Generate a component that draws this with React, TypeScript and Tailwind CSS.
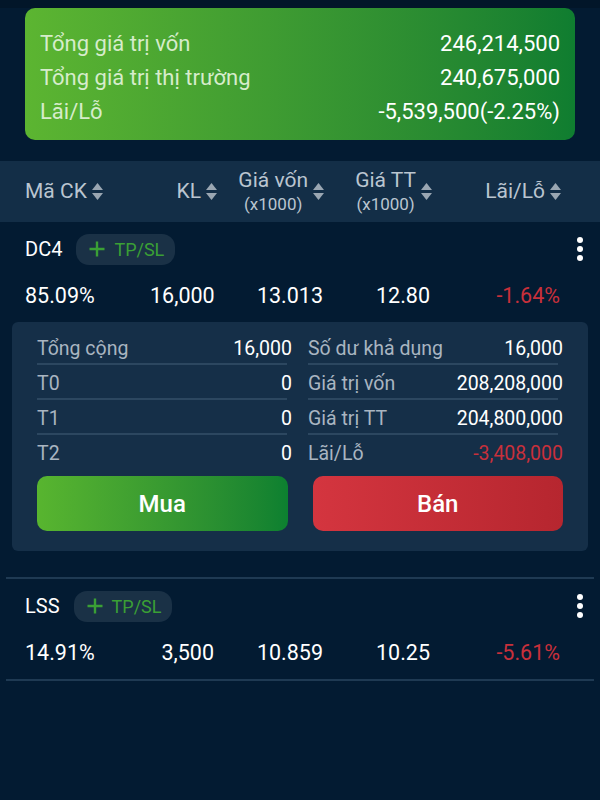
import React from "react";

const SortIcon = () => (
  <svg width="13" height="19" viewBox="0 0 13 19" className="shrink-0">
    <path d="M6.5 1 L12 8 L1 8 Z" fill="#9aa6b2" />
    <path d="M1 11 L12 11 L6.5 18 Z" fill="#9aa6b2" />
  </svg>
);

const Kebab = () => (
  <div className="flex flex-col items-center gap-[3px] w-[8px]">
    <span className="w-[6px] h-[6px] rounded-full bg-white" />
    <span className="w-[6px] h-[6px] rounded-full bg-white" />
    <span className="w-[6px] h-[6px] rounded-full bg-white" />
  </div>
);

const Pill = () => (
  <div className="h-[31px] pl-[13px] pr-[11px] rounded-[13px] bg-[#1a3146] flex items-center gap-[9px] text-[#3a9f35] text-[18px]">
    <svg width="16" height="16" viewBox="0 0 16 16">
      <path d="M8 0.5 V15.5 M0.5 8 H15.5" stroke="#3a9f35" strokeWidth="2.4" />
    </svg>
    <span>TP/SL</span>
  </div>
);

type Item = {
  code: string;
  pct: string;
  kl: string;
  von: string;
  tt: string;
  lai: string;
};

const StockItem = ({ item }: { item: Item }) => (
  <div className="pt-[12px] pb-[12px]">
    <div className="h-[30px] flex items-center pl-[25px] pr-[16px]">
      <span className="text-white text-[20px] mr-[14px]">{item.code}</span>
      <Pill />
      <div className="flex-1" />
      <Kebab />
    </div>
    <div className="mt-[16px] h-[30px] grid grid-cols-[125px_68px_107px_108px_129px] pl-[25px] items-center text-[21.5px] text-white">
      <div>{item.pct}</div>
      <div className="text-right pr-[4px]">{item.kl}</div>
      <div className="text-right pr-[2px]">{item.von}</div>
      <div className="text-right pr-[3px]">{item.tt}</div>
      <div className="text-right pr-[2px] text-[#c8303b]">{item.lai}</div>
    </div>
  </div>
);

const DetailRow = ({
  label,
  value,
  red,
  border = true,
}: {
  label: string;
  value: string;
  red?: boolean;
  border?: boolean;
}) => (
  <div className="relative h-[35px] flex items-center justify-between">
    <span className="text-[#a9b5c1]">{label}</span>
    <span className={red ? "text-[#c8303b]" : "text-white"}>{value}</span>
    {border && (
      <div className="absolute left-0 right-[5px] bottom-[1px] h-[2px] bg-[#2c4760]" />
    )}
  </div>
);

export default function App() {
  return (
    <div
      className="w-[600px] h-[800px] bg-[#031b32] overflow-hidden"
      style={{ fontFamily: "Roboto, 'Noto Sans', sans-serif" }}
    >
      <div className="h-[8px] bg-[#021629]" />
      <div className="mx-[25px] rounded-[10px] bg-gradient-to-r from-[#5cb531] to-[#0f7d30] pt-[18px] pb-[12px] px-[15px] text-[22px]">
        <div className="h-[34px] flex items-center justify-between">
          <span className="text-[#d6eccb]">Tổng giá trị vốn</span>
          <span className="text-white">246,214,500</span>
        </div>
        <div className="h-[34px] flex items-center justify-between">
          <span className="text-[#d6eccb]">Tổng giá trị thị trường</span>
          <span className="text-white">240,675,000</span>
        </div>
        <div className="h-[34px] flex items-center justify-between">
          <span className="text-[#d6eccb]">Lãi/Lỗ</span>
          <span className="text-white">-5,539,500(-2.25%)</span>
        </div>
      </div>

      <div className="mt-[21px] h-[61px] bg-[#132e47] grid grid-cols-[125px_68px_107px_108px_129px] pl-[25px] items-center text-[21px] text-[#bac5d0]">
        <div className="flex items-center gap-[4px]">
          <span>Mã CK</span>
          <SortIcon />
        </div>
        <div className="flex items-center justify-end gap-[4px]">
          <span>KL</span>
          <SortIcon />
        </div>
        <div className="flex items-center justify-end gap-[4px]">
          <div className="flex flex-col items-center leading-[24px]">
            <span>Giá vốn</span>
            <span className="text-[17px]">(x1000)</span>
          </div>
          <SortIcon />
        </div>
        <div className="flex items-center justify-end gap-[4px]">
          <div className="flex flex-col items-center leading-[24px]">
            <span>Giá TT</span>
            <span className="text-[17px]">(x1000)</span>
          </div>
          <SortIcon />
        </div>
        <div className="flex items-center justify-end gap-[4px]">
          <span>Lãi/Lỗ</span>
          <SortIcon />
        </div>
      </div>

      <StockItem
        item={{
          code: "DC4",
          pct: "85.09%",
          kl: "16,000",
          von: "13.013",
          tt: "12.80",
          lai: "-1.64%",
        }}
      />

      <div className="mx-[12px] rounded-[6px] bg-[#152f48] pt-[9px] pb-[20px] px-[25px] text-[19.5px]">
        <div className="grid grid-cols-2 gap-x-[16px]">
          <div>
            <DetailRow label="Tổng cộng" value="16,000" />
            <DetailRow label="T0" value="0" />
            <DetailRow label="T1" value="0" />
            <DetailRow label="T2" value="0" border={false} />
          </div>
          <div>
            <DetailRow label="Số dư khả dụng" value="16,000" />
            <DetailRow label="Giá trị vốn" value="208,208,000" />
            <DetailRow label="Giá trị TT" value="204,800,000" />
            <DetailRow label="Lãi/Lỗ" value="-3,408,000" red border={false} />
          </div>
        </div>
        <div className="mt-[5px] grid grid-cols-2 gap-x-[25px]">
          <button className="h-[55px] rounded-[10px] bg-gradient-to-r from-[#58b52f] to-[#0c8030] text-white text-[24px] font-medium">
            Mua
          </button>
          <button className="h-[55px] rounded-[10px] bg-gradient-to-r from-[#d4353f] to-[#b6262f] text-white text-[24px] font-medium">
            Bán
          </button>
        </div>
      </div>

      <div className="mt-[26px] mx-[6px] h-[2px] bg-[#1f3a53]" />
      <StockItem
        item={{
          code: "LSS",
          pct: "14.91%",
          kl: "3,500",
          von: "10.859",
          tt: "10.25",
          lai: "-5.61%",
        }}
      />
      <div className="mx-[6px] h-[2px] bg-[#1f3a53]" />
    </div>
  );
}
